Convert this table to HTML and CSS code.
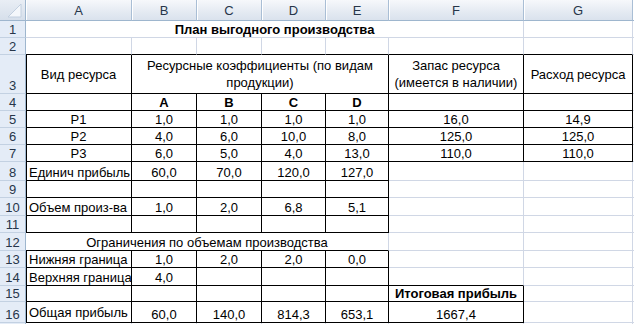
FILE: index.html
```html
<!DOCTYPE html>
<html lang="ru">
<head>
<meta charset="utf-8">
<title>План выгодного производства</title>
<link rel="stylesheet" href="styles.css">
</head>
<body>
<div class="sheet">
  <!-- header row -->
  <div class="corner"><svg class="tri" width="15" height="15" viewBox="0 0 15 15"><polygon points="14,1 14,14 1,14" fill="#f4f7fb" stroke="#c2cfdf" stroke-width="1"/></svg></div>
  <div class="ch">A</div>
  <div class="ch">B</div>
  <div class="ch">C</div>
  <div class="ch">D</div>
  <div class="ch">E</div>
  <div class="ch">F</div>
  <div class="ch">G</div>
  <div class="ch"></div>

  <!-- 1 -->
  <div class="rh">1</div>
  <div class="c b span6">План выгодного производства</div>
  <div class="c"></div>
  <div class="c"></div>

  <!-- 2 -->
  <div class="rh">2</div>
  <div class="c kb"></div>
  <div class="c kb"></div>
  <div class="c kb"></div>
  <div class="c kb"></div>
  <div class="c kb"></div>
  <div class="c kb"></div>
  <div class="c kb"></div>
  <div class="c"></div>

  <!-- 3 -->
  <div class="rh">3</div>
  <div class="c k bl m">Вид ресурса</div>
  <div class="c k m w span4">Ресурсные коэффициенты (по видам продукции)</div>
  <div class="c k m w">Запас ресурса (имеется в наличии)</div>
  <div class="c k m">Расход ресурса</div>
  <div class="c"></div>

  <!-- 4 -->
  <div class="rh">4</div>
  <div class="c k bl"></div>
  <div class="c k b">A</div>
  <div class="c k b">B</div>
  <div class="c k b">C</div>
  <div class="c k b">D</div>
  <div class="c k"></div>
  <div class="c k"></div>
  <div class="c"></div>

  <!-- 5 -->
  <div class="rh">5</div>
  <div class="c k bl">P1</div>
  <div class="c k">1,0</div>
  <div class="c k">1,0</div>
  <div class="c k">1,0</div>
  <div class="c k">1,0</div>
  <div class="c k">16,0</div>
  <div class="c k">14,9</div>
  <div class="c"></div>

  <!-- 6 -->
  <div class="rh">6</div>
  <div class="c k bl">P2</div>
  <div class="c k">4,0</div>
  <div class="c k">6,0</div>
  <div class="c k">10,0</div>
  <div class="c k">8,0</div>
  <div class="c k">125,0</div>
  <div class="c k">125,0</div>
  <div class="c"></div>

  <!-- 7 -->
  <div class="rh">7</div>
  <div class="c k bl">P3</div>
  <div class="c k">6,0</div>
  <div class="c k">5,0</div>
  <div class="c k">4,0</div>
  <div class="c k">13,0</div>
  <div class="c k">110,0</div>
  <div class="c k">110,0</div>
  <div class="c"></div>

  <!-- 8 -->
  <div class="rh">8</div>
  <div class="c k bl l">Единич прибыль</div>
  <div class="c k">60,0</div>
  <div class="c k">70,0</div>
  <div class="c k">120,0</div>
  <div class="c k">127,0</div>
  <div class="c"></div>
  <div class="c"></div>
  <div class="c"></div>

  <!-- 9 -->
  <div class="rh">9</div>
  <div class="c k bl"></div>
  <div class="c k"></div>
  <div class="c k"></div>
  <div class="c k"></div>
  <div class="c k"></div>
  <div class="c"></div>
  <div class="c"></div>
  <div class="c"></div>

  <!-- 10 -->
  <div class="rh">10</div>
  <div class="c k bl l">Объем произ-ва</div>
  <div class="c k">1,0</div>
  <div class="c k">2,0</div>
  <div class="c k">6,8</div>
  <div class="c k">5,1</div>
  <div class="c"></div>
  <div class="c"></div>
  <div class="c"></div>

  <!-- 11 -->
  <div class="rh">11</div>
  <div class="c k bl"></div>
  <div class="c k"></div>
  <div class="c k"></div>
  <div class="c k"></div>
  <div class="c k"></div>
  <div class="c"></div>
  <div class="c"></div>
  <div class="c"></div>

  <!-- 12 -->
  <div class="rh">12</div>
  <div class="c kb span5">Ограничения по объемам производства</div>
  <div class="c"></div>
  <div class="c"></div>
  <div class="c"></div>

  <!-- 13 -->
  <div class="rh">13</div>
  <div class="c k bl l">Нижняя граница</div>
  <div class="c k">1,0</div>
  <div class="c k">2,0</div>
  <div class="c k">2,0</div>
  <div class="c k">0,0</div>
  <div class="c"></div>
  <div class="c"></div>
  <div class="c"></div>

  <!-- 14 -->
  <div class="rh">14</div>
  <div class="c k bl l">Верхняя граница</div>
  <div class="c k">4,0</div>
  <div class="c k"></div>
  <div class="c k"></div>
  <div class="c k"></div>
  <div class="c kb"></div>
  <div class="c"></div>
  <div class="c"></div>

  <!-- 15 -->
  <div class="rh">15</div>
  <div class="c k bl"></div>
  <div class="c k"></div>
  <div class="c k"></div>
  <div class="c k"></div>
  <div class="c k"></div>
  <div class="c k b">Итоговая прибыль</div>
  <div class="c"></div>
  <div class="c"></div>

  <!-- 16 -->
  <div class="rh">16</div>
  <div class="c k bl l m">Общая прибыль</div>
  <div class="c k">60,0</div>
  <div class="c k">140,0</div>
  <div class="c k">814,3</div>
  <div class="c k">653,1</div>
  <div class="c k">1667,4</div>
  <div class="c"></div>
  <div class="c"></div>

  <!-- 17 (only a sliver is visible) -->
  <div class="rh"></div>
  <div class="c"></div>
  <div class="c"></div>
  <div class="c"></div>
  <div class="c"></div>
  <div class="c"></div>
  <div class="c"></div>
  <div class="c"></div>
  <div class="c"></div>
</div>
</body>
</html>
```

FILE: styles.css
```css
html, body {
  margin: 0;
  padding: 0;
  background: #ffffff;
  overflow: hidden;
}

.sheet {
  display: grid;
  grid-template-columns: 26px 106px 65px 65px 64px 63px 135px 109px 12px;
  grid-template-rows: 21px 17px 17px 39px 17px 17px 17px 17px 19px 17px 18px 17px 18px 17px 18px 16px 21px 12px;
  font-family: "Liberation Sans", Arial, sans-serif;
  font-size: 13px;
  color: #000000;
  width: 646px;
}

/* worksheet cells */
.c {
  box-sizing: border-box;
  border-right: 1px solid #d0d7e5;
  border-bottom: 1px solid #d0d7e5;
  display: flex;
  align-items: flex-end;
  justify-content: center;
  padding: 0 2px;
  line-height: 15px;
  white-space: nowrap;
  min-width: 0;
}

.k {
  border-right-color: #000000;
  border-bottom-color: #000000;
}

.kb {
  border-bottom-color: #000000;
}

.bl {
  box-shadow: inset 1px 0 0 #000000;
}

.l {
  justify-content: flex-start;
  padding-left: 3px;
}

.m {
  align-items: center;
}

.w {
  white-space: normal;
  text-align: center;
  line-height: 17px;
}

.b {
  font-weight: bold;
}

.span4 {
  grid-column: span 4;
}

.span5 {
  grid-column: span 5;
}

.span6 {
  grid-column: span 6;
}

/* headers */
.corner {
  box-sizing: border-box;
  background: linear-gradient(to bottom, #e9eef5, #d6dfeb);
  border-right: 1px solid #9eb6ce;
  border-bottom: 1px solid #9eb6ce;
  display: flex;
  align-items: flex-end;
  justify-content: flex-end;
  padding: 0 3px 2px 0;
}

.tri {
  display: block;
}

.ch {
  box-sizing: border-box;
  background: linear-gradient(to bottom, #f6f8fb, #e4eaf2 60%, #dae2ed);
  border-right: 1px solid #a9bed5;
  border-bottom: 1px solid #9eb6ce;
  box-shadow: inset 1px 0 0 #ffffff;
  display: flex;
  align-items: center;
  justify-content: center;
  font-size: 13px;
  color: #27364a;
  padding-top: 1px;
}

.rh {
  box-sizing: border-box;
  background: #e4ecf7;
  border-right: 1px solid #9eb6ce;
  border-bottom: 1px solid #c3d1e2;
  display: flex;
  align-items: flex-end;
  justify-content: center;
  font-size: 13px;
  line-height: 15px;
  color: #27364a;
}
```
